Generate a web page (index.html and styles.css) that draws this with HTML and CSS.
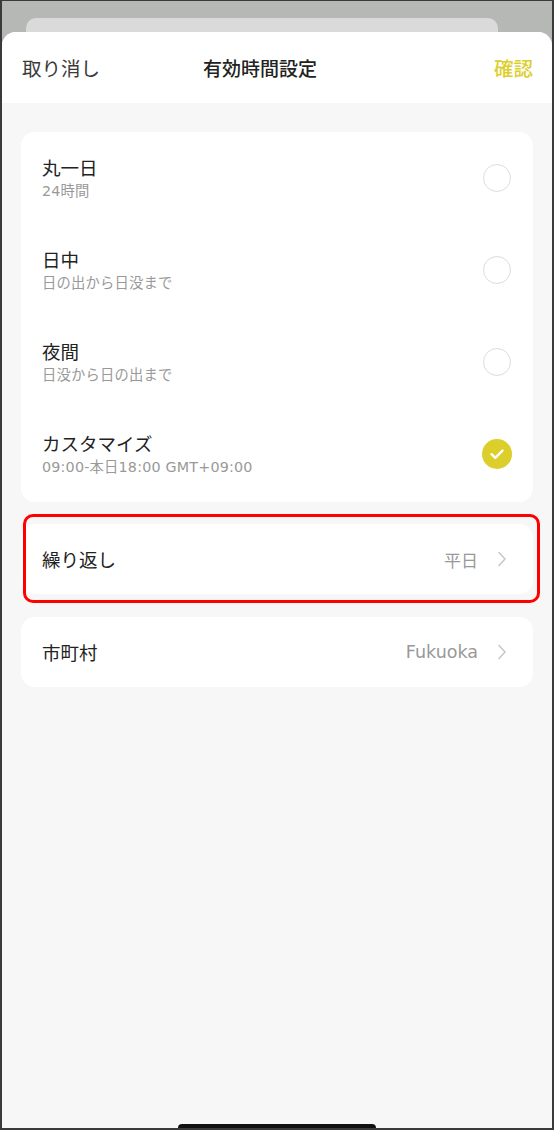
FILE: index.html
```html
<!DOCTYPE html>
<html lang="ja">
<head>
<meta charset="utf-8">
<link rel="stylesheet" href="styles.css">
</head>
<body>
<div class="frame">
  <div class="backdrop"><div class="back-card"></div></div>
  <div class="sheet">
    <header class="header">
      <span class="cancel">取り消し</span>
      <span class="title">有効時間設定</span>
      <span class="confirm">確認</span>
    </header>
    <main class="content">
      <section class="card options">
        <div class="option">
          <div class="texts"><div class="opt-title">丸一日</div><div class="opt-sub">24時間</div></div>
          <span class="radio"></span>
        </div>
        <div class="option">
          <div class="texts"><div class="opt-title">日中</div><div class="opt-sub">日の出から日没まで</div></div>
          <span class="radio"></span>
        </div>
        <div class="option">
          <div class="texts"><div class="opt-title">夜間</div><div class="opt-sub">日没から日の出まで</div></div>
          <span class="radio"></span>
        </div>
        <div class="option">
          <div class="texts"><div class="opt-title">カスタマイズ</div><div class="opt-sub">09:00-本日18:00 GMT+09:00</div></div>
          <span class="radio checked"><svg viewBox="0 0 30 30" width="30" height="30"><path d="M9.5 15.2 L13.3 18.8 L20.5 11.6" fill="none" stroke="#fff" stroke-width="2.4" stroke-linecap="round" stroke-linejoin="round"/></svg></span>
        </div>
      </section>
      <section class="card row-card highlighted">
        <span class="row-label">繰り返し</span>
        <span class="row-value">平日</span>
        <svg class="chev" viewBox="0 0 10 16" width="10" height="16"><path d="M2 1.5 L8 8 L2 14.5" fill="none" stroke="#c7c7c7" stroke-width="1.5" stroke-linecap="round" stroke-linejoin="round"/></svg>
        <div class="annot"></div>
      </section>
      <section class="card row-card">
        <span class="row-label">市町村</span>
        <span class="row-value latin">Fukuoka</span>
        <svg class="chev" viewBox="0 0 10 16" width="10" height="16"><path d="M2 1.5 L8 8 L2 14.5" fill="none" stroke="#c7c7c7" stroke-width="1.5" stroke-linecap="round" stroke-linejoin="round"/></svg>
      </section>
    </main>
    <div class="home-bar"></div>
  </div>
</div>
</body>
</html>
```
FILE: styles.css
```css
* { box-sizing: border-box; }
html, body { margin: 0; padding: 0; }
body {
  width: 554px;
  height: 1130px;
  overflow: hidden;
  font-family: "Noto Sans CJK JP", "Noto Sans", sans-serif;
  color: #333;
}
.frame {
  width: 554px;
  height: 1130px;
  border: 2px solid #3a3a3a;
  border-top-width: 1px;
  display: flex;
  flex-direction: column;
  background: #b6b8b5;
  overflow: hidden;
}
.backdrop {
  height: 31px;
  padding: 17px 54px 0 24px;
  flex: none;
}
.back-card {
  height: 14px;
  background: #dadada;
  border-radius: 10px 10px 0 0;
}
.sheet {
  flex: 1;
  position: relative;
  background: #f7f7f7;
  border-radius: 14px 14px 0 0;
  overflow: hidden;
  display: flex;
  flex-direction: column;
}
.header {
  height: 71px;
  background: #fff;
  display: flex;
  align-items: center;
  justify-content: space-between;
  padding: 0 19px 0 20px;
  position: relative;
  font-size: 19.5px;
  flex: none;
}
.cancel { color: #3a3a3a; }
.title {
  position: absolute;
  left: 0; right: 34px;
  text-align: center;
  font-weight: 500;
  color: #222;
  font-size: 19px;
  pointer-events: none;
}
.confirm { color: #dccf2c; font-weight: 500; }
.content {
  padding: 29px 19px 0 19px;
  display: flex;
  flex-direction: column;
  gap: 22px;
}
.card {
  background: #fff;
  border-radius: 14px;
}
.options { padding-bottom: 2px; }
.option {
  height: 92px;
  display: flex;
  align-items: center;
  justify-content: space-between;
  padding: 0 21px 0 21px;
}
.texts { display: flex; flex-direction: column; padding-top: 0px; }
.opt-title { font-size: 18.5px; line-height: 24px; color: #222; }
.opt-sub {
  font-family: "DejaVu Sans", "Noto Sans CJK JP", sans-serif;
  font-size: 14.3px;
  line-height: 21px;
  margin-top: 2px;
  letter-spacing: 0.2px;
  color: #999;
}
.radio {
  width: 28px;
  height: 28px;
  border-radius: 50%;
  border: 1.5px solid #dcdcdc;
  margin-right: 1px;
  display: flex;
  align-items: center;
  justify-content: center;
}
.radio.checked {
  width: 30px;
  height: 30px;
  border: none;
  background: #dccf2c;
  margin-right: 0;
}
.row-card {
  height: 70px;
  display: flex;
  align-items: center;
  padding: 0 26px 0 21px;
  position: relative;
}
.row-label { font-size: 18.5px; color: #222; flex: 1; }
.row-value { font-size: 17px; color: #999; margin-right: 19px; }
.row-value.latin { font-family: "DejaVu Sans", "Noto Sans CJK JP", sans-serif; font-size: 17.5px; }
.chev { flex: none; }
.annot {
  position: absolute;
  left: 2px;
  right: -7px;
  top: -10px;
  bottom: -9px;
  border: 3px solid #ff0000;
  border-radius: 10px;
  pointer-events: none;
}
.highlighted + .row-card { margin-top: 1px; }
.home-bar {
  position: absolute;
  left: 176px;
  bottom: -4px;
  width: 198px;
  height: 8px;
  border-radius: 4px;
  background: #111;
}
```
